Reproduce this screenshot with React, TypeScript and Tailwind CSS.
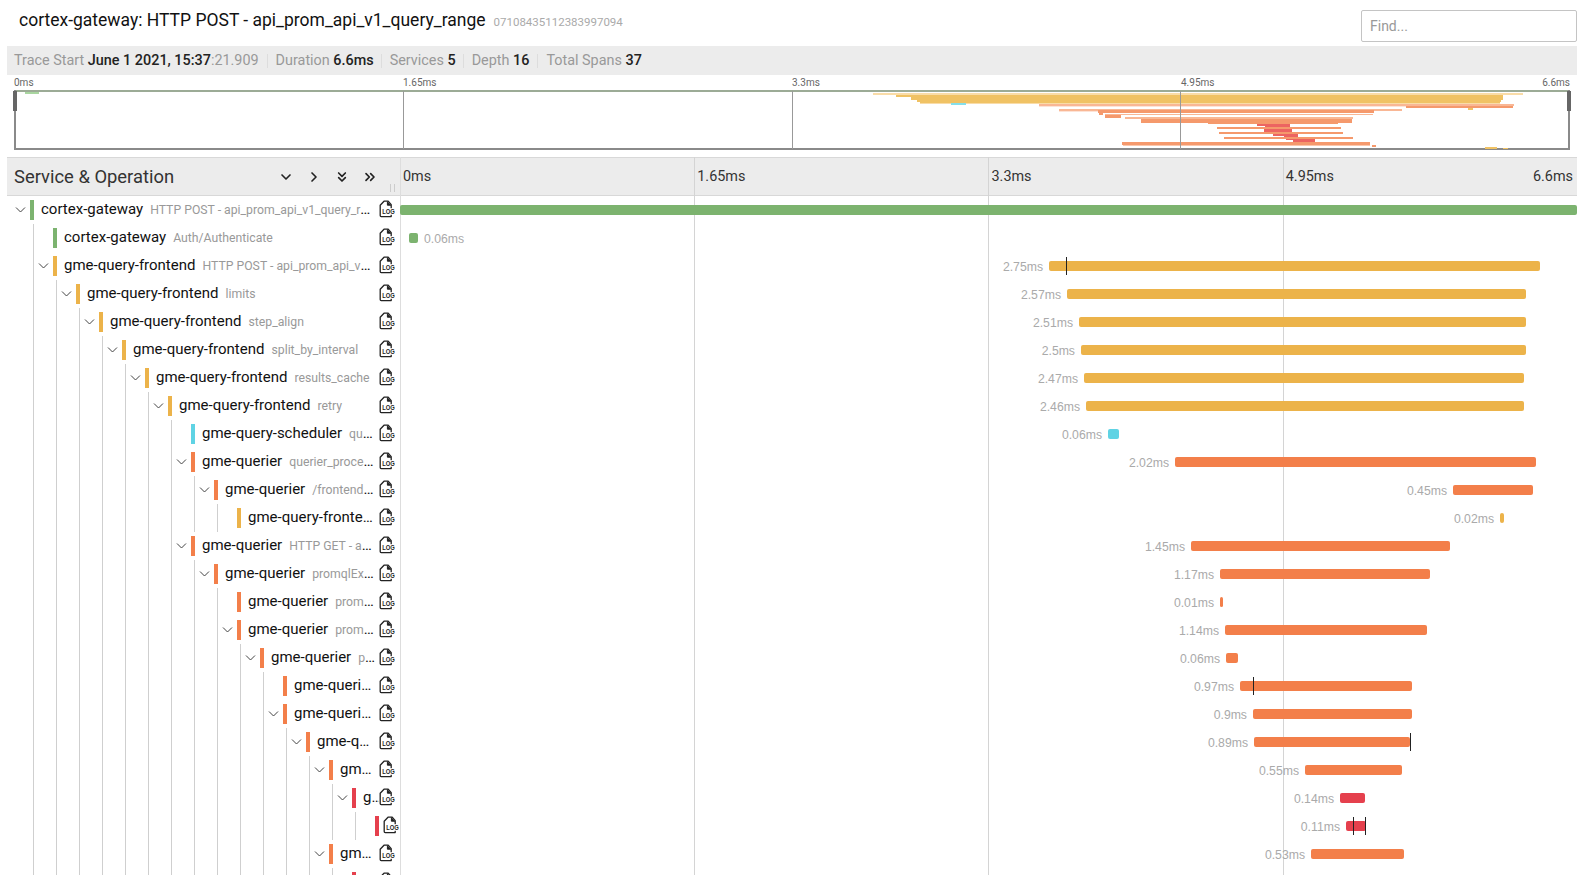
import { ChevronDown, ChevronRight, ChevronsDown, ChevronsRight } from "lucide-react";

const GREEN = "#7cb36f";
const YELLOW = "#ecb34a";
const CYAN = "#5fd3e4";
const ORANGE = "#f37f4a";
const RED = "#e5404d";

// Timeline column: x 400 -> 1577
const TL_LEFT = 400;
const TL_WIDTH = 1177;

interface Span {
  depth: number;
  open?: boolean;
  service: string;
  op: string;
  color: string;
  from: number;
  to: number;
  label: string;
  labelRight?: boolean;
  logs?: number[];
}

const SPANS: Span[] = [
  { depth: 0, open: true, service: "cortex-gateway", op: "HTTP POST - api_prom_api_v1_query_range", color: GREEN, from: 400, to: 1577, label: "" },
  { depth: 1, service: "cortex-gateway", op: "Auth/Authenticate", color: GREEN, from: 409, to: 418, label: "0.06ms", labelRight: true },
  { depth: 1, open: true, service: "gme-query-frontend", op: "HTTP POST - api_prom_api_v1_query_range", color: YELLOW, from: 1049, to: 1540, label: "2.75ms", logs: [1066] },
  { depth: 2, open: true, service: "gme-query-frontend", op: "limits", color: YELLOW, from: 1067, to: 1526, label: "2.57ms" },
  { depth: 3, open: true, service: "gme-query-frontend", op: "step_align", color: YELLOW, from: 1079, to: 1526, label: "2.51ms" },
  { depth: 4, open: true, service: "gme-query-frontend", op: "split_by_interval", color: YELLOW, from: 1081, to: 1526, label: "2.5ms" },
  { depth: 5, open: true, service: "gme-query-frontend", op: "results_cache", color: YELLOW, from: 1084, to: 1524, label: "2.47ms" },
  { depth: 6, open: true, service: "gme-query-frontend", op: "retry", color: YELLOW, from: 1086, to: 1524, label: "2.46ms" },
  { depth: 7, service: "gme-query-scheduler", op: "queue", color: CYAN, from: 1108, to: 1119, label: "0.06ms" },
  { depth: 7, open: true, service: "gme-querier", op: "querier_processor", color: ORANGE, from: 1175, to: 1536, label: "2.02ms" },
  { depth: 8, open: true, service: "gme-querier", op: "/frontendv2pb.Frontend", color: ORANGE, from: 1453, to: 1533, label: "0.45ms" },
  { depth: 9, service: "gme-query-frontend", op: "/frontendv2pb.Frontend", color: YELLOW, from: 1500, to: 1504, label: "0.02ms" },
  { depth: 7, open: true, service: "gme-querier", op: "HTTP GET - api_prom_api_v1_query_range", color: ORANGE, from: 1191, to: 1450, label: "1.45ms" },
  { depth: 8, open: true, service: "gme-querier", op: "promqlExecutor", color: ORANGE, from: 1220, to: 1430, label: "1.17ms" },
  { depth: 9, service: "gme-querier", op: "promql_prepare", color: ORANGE, from: 1220, to: 1223, label: "0.01ms" },
  { depth: 9, open: true, service: "gme-querier", op: "promql_eval", color: ORANGE, from: 1225, to: 1427, label: "1.14ms" },
  { depth: 10, open: true, service: "gme-querier", op: "populate", color: ORANGE, from: 1226, to: 1238, label: "0.06ms" },
  { depth: 11, service: "gme-querier", op: "select", color: ORANGE, from: 1240, to: 1412, label: "0.97ms", logs: [1253] },
  { depth: 11, open: true, service: "gme-querier", op: "select", color: ORANGE, from: 1253, to: 1412, label: "0.9ms" },
  { depth: 12, open: true, service: "gme-querier", op: "select", color: ORANGE, from: 1254, to: 1410, label: "0.89ms", logs: [1410] },
  { depth: 13, open: true, service: "gme-querier", op: "select", color: ORANGE, from: 1305, to: 1402, label: "0.55ms" },
  { depth: 14, open: true, service: "gme-querier", op: "", color: RED, from: 1340, to: 1365, label: "0.14ms" },
  { depth: 15, service: "", op: "", color: RED, from: 1346, to: 1366, label: "0.11ms", logs: [1353, 1365] },
  { depth: 13, open: true, service: "gme-querier", op: "select", color: ORANGE, from: 1311, to: 1404, label: "0.53ms" },
  { depth: 14, open: true, service: "gme-querier", op: "", color: RED, from: 1340, to: 1365, label: "" },
];

const M_YELLOW = "#f0c264";
const M_PALE = "#f9dca8";
const M_ORANGE = "#f5996c";
const M_LIGHT = "#f9b795";
const M_PEACH = "#fde3d6";
const M_RED = "#ec6461";

// Minimap rects in page coordinates: x1, x2, y1, y2, fill
const MINI: [number, number, number, number, string][] = [
  [25, 39, 92, 94, "#a9d6a0"],
  [873, 1523, 93, 95, M_PALE],
  [896, 1503, 95, 97, M_YELLOW],
  [911, 1503, 97, 100, M_YELLOW],
  [917, 1501, 100, 102, M_YELLOW],
  [920, 1500, 102, 103, M_YELLOW],
  [920, 1500, 103, 104, M_PALE],
  [951, 966, 103, 105, "#85dfea"],
  [1039, 1514, 104, 106, M_LIGHT],
  [1039, 1406, 106, 107, M_PEACH],
  [1406, 1513, 106, 108, M_ORANGE],
  [1468, 1473, 108, 110, M_YELLOW],
  [1059, 1402, 109, 111, M_LIGHT],
  [1098, 1374, 110, 113, M_ORANGE],
  [1059, 1098, 111, 112, M_PEACH],
  [1099, 1103, 113, 115, M_ORANGE],
  [1105, 1373, 114, 115, M_LIGHT],
  [1105, 1121, 115, 118, M_ORANGE],
  [1125, 1353, 117, 119, M_LIGHT],
  [1141, 1352, 119, 123, M_ORANGE],
  [1208, 1338, 123, 124, M_ORANGE],
  [1257, 1290, 124, 126, M_RED],
  [1265, 1290, 126, 127, M_RED],
  [1217, 1341, 127, 129, M_ORANGE],
  [1264, 1292, 129, 132, M_RED],
  [1271, 1292, 132, 133, M_RED],
  [1219, 1343, 132, 134, M_ORANGE],
  [1273, 1298, 134, 136, M_RED],
  [1284, 1298, 136, 137, M_RED],
  [1224, 1353, 137, 139, M_ORANGE],
  [1286, 1315, 139, 140, M_RED],
  [1293, 1315, 140, 142, M_RED],
  [1122, 1370, 142, 145, M_ORANGE],
  [1123, 1370, 145, 146, "#fbc6ab"],
  [1372, 1376, 145, 147, M_ORANGE],
  [1485, 1497, 147, 149, M_YELLOW],
  [1503, 1508, 148, 149, M_YELLOW],
];

function LogIcon() {
  return (
    <svg width="16" height="18" viewBox="0 0 16 18" className="shrink-0">
      <path d="M5 1.2H9.2L12.2 4.6V16.6H2.2A1 1 0 0 1 1.2 15.6V5.2Z" fill="#fff" stroke="#222" strokeWidth="1.3" strokeLinejoin="round" />
      <path d="M8.4 1.5V5.2H12" fill="#222" stroke="#222" strokeWidth="1" />
      <rect x="3.2" y="8.2" width="12.8" height="6.6" fill="#fff" />
      <text x="3.2" y="14" fontSize="7.5" fontWeight="700" fontFamily="Liberation Sans, sans-serif" fill="#222" textLength="12.6" lengthAdjust="spacingAndGlyphs">
        LOG
      </text>
    </svg>
  );
}

function Row({ span }: { span: Span }) {
  const pct = (x: number) => ((x - TL_LEFT) / TL_WIDTH) * 100;
  const left = pct(span.from);
  const width = pct(span.to) - left;
  const namePad = span.depth >= 14 ? "" : span.depth === 10 ? "pr-[1px]" : "pr-[4px]";

  return (
    <div className="flex h-[28px]">
      {/* Name column */}
      <div className="flex h-full w-[393px] shrink-0 items-center pl-[4px]">
        {Array.from({ length: span.depth }).map((_, i) => (
          <div key={i} className="h-full w-[23px] shrink-0 border-r border-[#cfcfcf]" />
        ))}
        <div className="mb-[2px] flex w-[19px] shrink-0 items-center justify-center text-[#333]">
          {span.open && (
            <svg width="11" height="11" viewBox="0 0 11 11" fill="none" stroke="#444" strokeWidth="1">
              <path d="M1 3.5L5.5 8L10 3.5" />
            </svg>
          )}
        </div>
        <div className="h-[20px] w-[4px] shrink-0" style={{ backgroundColor: span.color }} />
        {span.service ? (
          <div className={`mb-[2px] ml-[7px] min-w-0 flex-1 truncate text-[15px] leading-[20px] text-[#111] ${namePad}`}>
            {span.service}
            <span className="ml-[7px] text-[12.24px] text-[#999]">{span.op}</span>
          </div>
        ) : (
          <div className="w-[4px] shrink-0" />
        )}
        <div className="mb-[2px] mr-[5px]">
          <LogIcon />
        </div>
      </div>

      {/* Timeline column */}
      <div className="relative h-full min-w-0 flex-1">
        <div className="absolute top-[9px] h-[10px] rounded-[2px]" style={{ left: `${left}%`, width: `${width}%`, backgroundColor: span.color }} />
        {span.label && (
          <div
            className={`absolute top-[9px] whitespace-nowrap font-['Liberation_Sans',sans-serif] text-[12.24px] leading-[13px] text-[#aaa] ${span.labelRight ? "pl-[6px]" : "-translate-x-full pr-[6px]"}`}
            style={{ left: `${span.labelRight ? pct(span.to) : left}%` }}
          >
            {span.label}
          </div>
        )}
        {span.logs?.map((x) => (
          <div key={x} className="absolute top-[5px] h-[18px] w-px bg-[#222]" style={{ left: `${pct(x)}%` }} />
        ))}
      </div>
    </div>
  );
}

function Minimap() {
  return (
    <div className="ml-[14px] w-[1556px]">
      <div className="grid h-[15px] grid-cols-4 items-center text-[10px] text-[#666]">
        <span>0ms</span>
        <span>1.65ms</span>
        <span>3.3ms</span>
        <span className="flex justify-between">
          <span>4.95ms</span>
          <span>6.6ms</span>
        </span>
      </div>
      <svg width="1558" height="60" viewBox="13 90 1558 60" shapeRendering="crispEdges" className="-ml-px block max-w-none">
        <rect x="15" y="91" width="1554" height="58" fill="#fff" stroke="#8a8a8a" strokeWidth="2" />
        <rect x="16" y="90" width="1552" height="2" fill="#9cab96" />
        {MINI.map(([x1, x2, y1, y2, fill], i) => (
          <rect key={i} x={x1} y={y1} width={x2 - x1} height={y2 - y1} fill={fill} />
        ))}
        {[403, 792, 1180].map((x) => (
          <rect key={x} x={x} y="91" width="1" height="58" fill="#999" />
        ))}
        <rect x="13" y="91" width="4" height="20" fill="#666" />
        <rect x="1567" y="91" width="4" height="20" fill="#666" />
      </svg>
    </div>
  );
}

export default function App() {
  return (
    <div className="h-[875px] w-[1594px] overflow-hidden bg-white font-['Roboto',sans-serif] text-[#111]">
      <div className="ml-[7px] w-[1570px]">
        {/* Title bar */}
        <div className="flex h-[46px] items-start">
          <div className="ml-[12px] mt-[8px] flex items-baseline whitespace-nowrap">
            <span className="text-[17.5px] leading-[24px]">cortex-gateway: HTTP POST - api_prom_api_v1_query_range</span>
            <span className="ml-[8px] text-[11.5px] text-[#aaa]">07108435112383997094</span>
          </div>
          <input
            readOnly
            placeholder="Find..."
            className="ml-auto mt-[10px] h-[32px] w-[216px] rounded-[2px] border border-[#c4c4c4] px-[8px] text-[14px] outline-none placeholder:text-[#999]"
          />
        </div>

        {/* Summary */}
        <div className="flex h-[29px] items-center bg-[#ececec] pl-[7px] text-[14.4px] text-[#999]">
          <span>Trace Start <span className="font-medium text-[#222]">June 1 2021, 15:37</span>:21.909</span>
          <span className="mx-[8px] h-[14px] w-px bg-[#ddd]" />
          <span>Duration <span className="font-medium text-[#222]">6.6ms</span></span>
          <span className="mx-[7.5px] h-[14px] w-px bg-[#ddd]" />
          <span>Services <span className="font-medium text-[#222]">5</span></span>
          <span className="mx-[7.5px] h-[14px] w-px bg-[#ddd]" />
          <span>Depth <span className="font-medium text-[#222]">16</span></span>
          <span className="mx-[8px] h-[14px] w-px bg-[#ddd]" />
          <span>Total Spans <span className="font-medium text-[#222]">37</span></span>
        </div>
      </div>

      <Minimap />

      {/* Trace table */}
      <div className="relative ml-[7px] mt-[7px] w-[1570px]">
        {/* Column rules, lying over the rows */}
        <div className="pointer-events-none absolute inset-y-0 left-[393px] w-px bg-[#ddd]" />
        <div className="pointer-events-none absolute inset-y-0 left-[687px] w-px bg-[#d4d4d4]" />
        <div className="pointer-events-none absolute inset-y-0 left-[981px] w-px bg-[#d4d4d4]" />
        <div className="pointer-events-none absolute inset-y-0 left-[1276px] w-px bg-[#d4d4d4]" />

        <div className="flex h-[39px] border-y border-[#d8d8d8] bg-[#ececec]">
          <div className="relative flex w-[393px] shrink-0 items-center">
            <span className="ml-[7px] text-[18.4px] text-[#333]">Service &amp; Operation</span>
            <div className="ml-auto mr-[14px] flex items-center text-[#222]">
              <ChevronDown size={16} strokeWidth={2.5} className="mr-[12px]" />
              <ChevronRight size={16} strokeWidth={2.5} className="mr-[12px]" />
              <ChevronsDown size={16} strokeWidth={2.5} className="mr-[12px]" />
              <ChevronsRight size={16} strokeWidth={2.5} className="mr-[8px]" />
            </div>
            {/* Column resizer grip */}
            <div className="absolute bottom-[3px] right-[5px] flex h-[8px] gap-[3px]">
              <div className="w-px bg-[#ccc]" />
              <div className="w-px bg-[#ccc]" />
            </div>
          </div>
          <div className="grid min-w-0 flex-1 grid-cols-4 items-center text-[14.4px] text-[#333]">
            <span className="pl-[3px]">0ms</span>
            <span className="pl-[3px]">1.65ms</span>
            <span className="pl-[3px]">3.3ms</span>
            <span className="flex justify-between pl-[3px] pr-[4px]">
              <span>4.95ms</span>
              <span>6.6ms</span>
            </span>
          </div>
        </div>

        {SPANS.map((span, i) => (
          <Row key={i} span={span} />
        ))}
      </div>
    </div>
  );
}
